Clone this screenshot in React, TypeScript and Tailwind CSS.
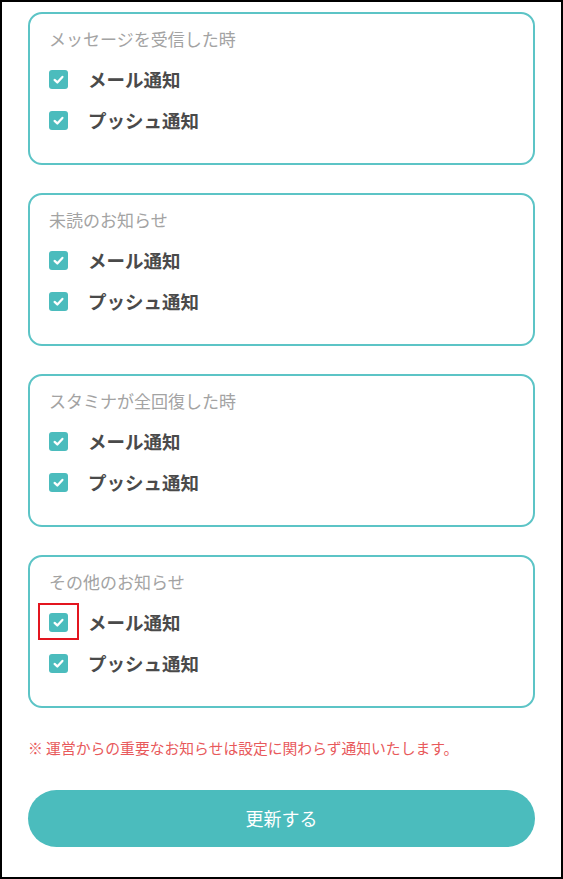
const sections = [
  "メッセージを受信した時",
  "未読のお知らせ",
  "スタミナが全回復した時",
  "その他のお知らせ",
];

function CheckBox({ highlight }: { highlight?: boolean }) {
  return (
    <span className="relative flex h-[19px] w-[19px] shrink-0 items-center justify-center rounded-[3px] bg-[#4bbcbd]">
      <svg viewBox="0 0 12 12" className="h-[13px] w-[13px]" fill="none">
        <path
          d="M2.4 6.4 4.9 8.7 9.6 3.6"
          stroke="white"
          strokeWidth="2.1"
          strokeLinecap="round"
          strokeLinejoin="round"
        />
      </svg>
      {highlight && (
        <span className="absolute -bottom-[8px] -left-[11px] -right-[11px] -top-[10px] border-2 border-[#e3151f]" />
      )}
    </span>
  );
}

function Row({ label, highlight }: { label: string; highlight?: boolean }) {
  return (
    <div className="flex h-[41px] items-center">
      <CheckBox highlight={highlight} />
      <span className="ml-[20px] text-[18.5px] font-bold leading-none text-[#4a4a4a]">
        {label}
      </span>
    </div>
  );
}

export default function App() {
  return (
    <div
      className="h-[879px] w-[563px] border-2 border-black bg-white px-[26px] pt-[10px]"
      style={{ fontFamily: '"Noto Sans CJK JP", "Noto Sans", sans-serif' }}
    >
      <div className="flex flex-col gap-[28px]">
        {sections.map((title, i) => (
          <div
            key={title}
            className="h-[153px] rounded-[14px] border-2 border-[#5cc4c6] px-[19px] pt-[13px]"
          >
            <p className="text-[17px] leading-[24px] text-[#a3a3a3]">{title}</p>
            <div className="mt-[8px]">
              <Row label="メール通知" highlight={i === 3} />
              <Row label="プッシュ通知" />
            </div>
          </div>
        ))}
      </div>

      <p className="mt-[30px] text-[14.8px] leading-[20px] text-[#e8595b]">
        ※ 運営からの重要なお知らせは設定に関わらず通知いたします。
      </p>

      <button className="mt-[32px] flex h-[57px] w-full items-center justify-center rounded-full bg-[#4bbcbd] text-[18px] text-white">
        更新する
      </button>
    </div>
  );
}
